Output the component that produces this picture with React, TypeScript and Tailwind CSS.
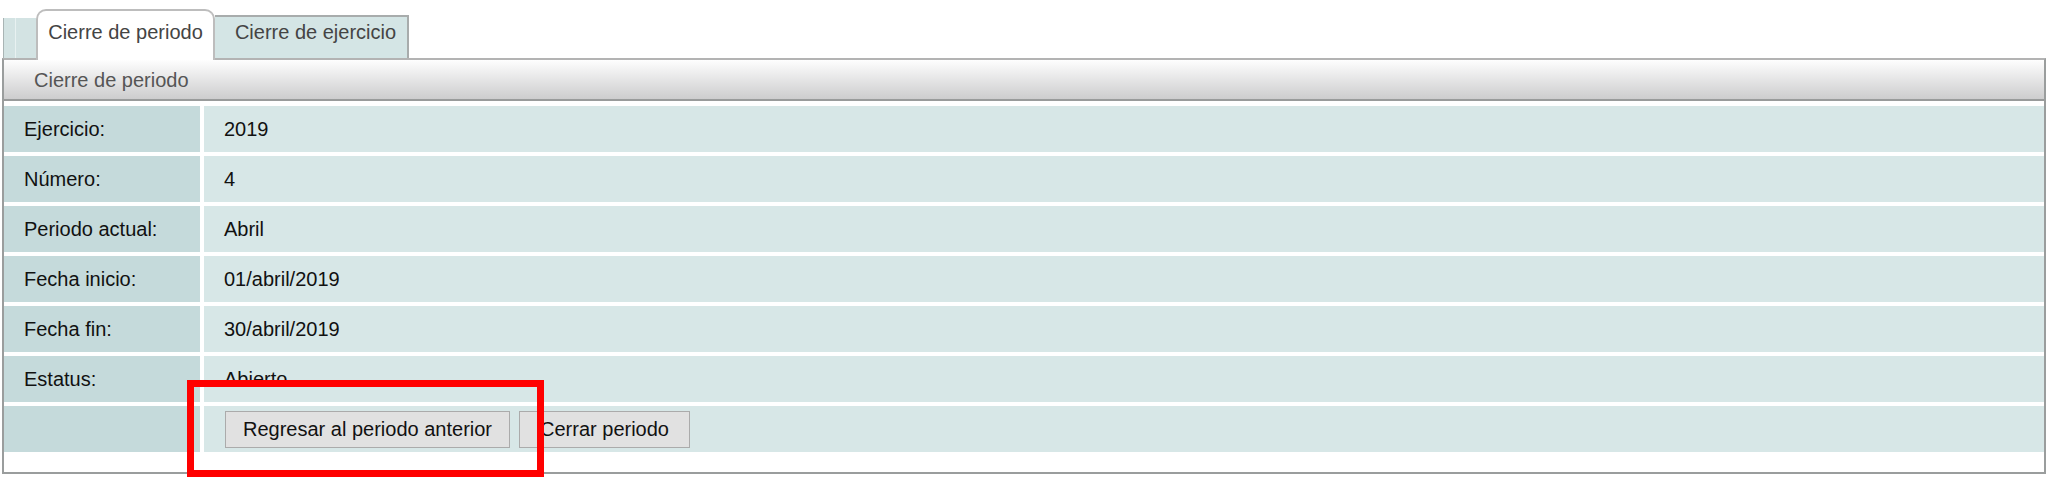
import { FC } from "react";

const ROWS = [
    { label: 'Ejercicio:', value: '2019' },
    { label: 'Número:', value: '4' },
    { label: 'Periodo actual:', value: 'Abril' },
    { label: 'Fecha inicio:', value: '01/abril/2019' },
    { label: 'Fecha fin:', value: '30/abril/2019' },
    { label: 'Estatus:', value: 'Abierto' },
];

const App: FC = () => {
    return (
        <div className="relative w-full h-[477px] bg-white font-['Liberation_Sans',Arial,sans-serif] text-[20px] text-[#111] overflow-hidden">
            <div className="ml-[2px] w-[2044px]">
                {/* Tabs */}
                <div className="flex items-end h-[58px]">
                    <div className="ml-[1px] w-[33px] h-[40px] bg-[#d3e3e3] border-l border-[#a9b4b4] flex">
                        <div className="ml-[11px] w-px h-full bg-[#e8f1f1]" />
                    </div>
                    <div className="relative z-10 -mb-[2px] w-[179px] h-[51px] bg-white border-2 border-b-0 border-[#bdbdbd] rounded-t-[10px] flex justify-center pt-[10px] leading-[23px] text-[#444]">
                        Cierre de periodo
                    </div>
                    <div className="w-[194px] h-[43px] bg-[#d4e5e5] border-2 border-b-0 border-l-0 border-[#a8acac] flex justify-center pl-[9px] pt-[4px] leading-[23px] text-[#444]">
                        Cierre de ejercicio
                    </div>
                </div>

                {/* Panel */}
                <div className="border-2 border-[#9a9d9d] border-t-[#b3b3b3] pb-[20px]">
                    <div className="h-[41px] bg-gradient-to-b from-[#fefefe] to-[#cdcdce] border-b-2 border-[#999b9b] flex items-center pl-[30px] text-[#555]">
                        Cierre de periodo
                    </div>

                    <div className="mt-[5px] grid grid-cols-[196px_1fr] gap-x-[4px] gap-y-[4px]">
                        {ROWS.map(row => (
                            <div key={row.label} className="contents">
                                <div className="h-[46px] bg-[#c5dadb] flex items-center pl-[20px]">{row.label}</div>
                                <div className="h-[46px] bg-[#d7e7e7] flex items-center pl-[20px]">{row.value}</div>
                            </div>
                        ))}
                        <div className="h-[46px] bg-[#c5dadb]" />
                        <div className="h-[46px] bg-[#d7e7e7] flex items-center pl-[21px] gap-[9px]">
                            <button className="h-[37px] px-[17px] border border-[#ababab] bg-[#e1e1e1] text-[#111] leading-none">
                                Regresar al periodo anterior
                            </button>
                            <button className="h-[37px] px-[20px] border border-[#ababab] bg-[#e1e1e1] text-[#111] leading-none">
                                Cerrar periodo
                            </button>
                        </div>
                    </div>
                </div>
            </div>

            {/* Red highlight annotation */}
            <div className="absolute left-[187px] top-[380px] w-[357px] h-[97px] border-[7px] border-[#ff0000]" />
        </div>
    );
};

export default App;
